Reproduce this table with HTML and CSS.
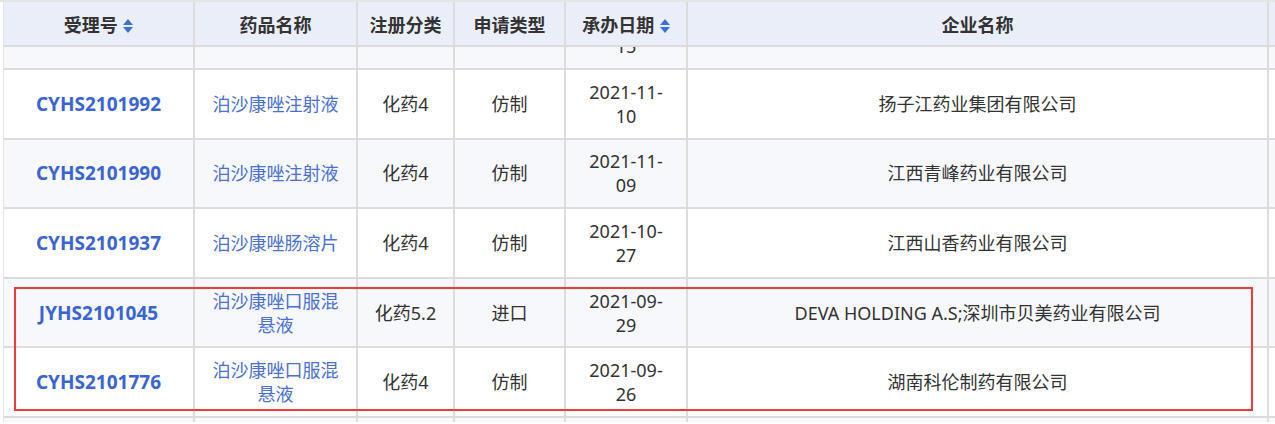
FILE: index.html
```html
<!DOCTYPE html>
<html lang="zh-CN">
<head>
    <meta charset="UTF-8">
    <meta name="viewport" content="width=device-width, initial-scale=1.0">
    <title>受理品种列表</title>
    <link rel="stylesheet" href="styles.css">
</head>
<body>

    <div class="page">
        <!-- Fixed header -->
        <table class="grid head">
            <colgroup>
                <col class="c-no"><col class="c-name"><col class="c-cat"><col class="c-type"><col class="c-date"><col class="c-corp"><col class="c-more">
            </colgroup>
            <thead>
                <tr>
                    <th>受理号 <svg class="sort" viewBox="0 0 10 14"><polygon points="5,0 10,6 0,6"/><polygon points="0,8 10,8 5,14"/></svg></th>
                    <th>药品名称</th>
                    <th>注册分类</th>
                    <th>申请类型</th>
                    <th>承办日期 <svg class="sort" viewBox="0 0 10 14"><polygon points="5,0 10,6 0,6"/><polygon points="0,8 10,8 5,14"/></svg></th>
                    <th>企业名称</th>
                    <th></th>
                </tr>
            </thead>
        </table>

        <!-- Scrolled body (first row mostly under the header) -->
        <div class="viewport">
            <table class="grid body">
                <colgroup>
                    <col class="c-no"><col class="c-name"><col class="c-cat"><col class="c-type"><col class="c-date"><col class="c-corp"><col class="c-more">
                </colgroup>
                <tbody>
                    <tr>
                        <td></td>
                        <td></td>
                        <td></td>
                        <td></td>
                        <td class="date">2021-11-15</td>
                        <td></td>
                        <td></td>
                    </tr>
                    <tr>
                        <td class="no">CYHS2101992</td>
                        <td class="name">泊沙康唑注射液</td>
                        <td>化药4</td>
                        <td>仿制</td>
                        <td class="date">2021-11-10</td>
                        <td>扬子江药业集团有限公司</td>
                        <td></td>
                    </tr>
                    <tr>
                        <td class="no">CYHS2101990</td>
                        <td class="name">泊沙康唑注射液</td>
                        <td>化药4</td>
                        <td>仿制</td>
                        <td class="date">2021-11-09</td>
                        <td>江西青峰药业有限公司</td>
                        <td></td>
                    </tr>
                    <tr>
                        <td class="no">CYHS2101937</td>
                        <td class="name">泊沙康唑肠溶片</td>
                        <td>化药4</td>
                        <td>仿制</td>
                        <td class="date">2021-10-27</td>
                        <td>江西山香药业有限公司</td>
                        <td></td>
                    </tr>
                    <tr>
                        <td class="no">JYHS2101045</td>
                        <td class="name">泊沙康唑口服混悬液</td>
                        <td>化药5.2</td>
                        <td>进口</td>
                        <td class="date">2021-09-29</td>
                        <td>DEVA HOLDING A.S;深圳市贝美药业有限公司</td>
                        <td></td>
                    </tr>
                    <tr>
                        <td class="no">CYHS2101776</td>
                        <td class="name">泊沙康唑口服混悬液</td>
                        <td>化药4</td>
                        <td>仿制</td>
                        <td class="date">2021-09-26</td>
                        <td>湖南科伦制药有限公司</td>
                        <td></td>
                    </tr>
                    <tr>
                        <td></td><td></td><td></td><td></td><td></td><td></td><td></td>
                    </tr>
                </tbody>
            </table>
        </div>

        <!-- Annotation box -->
        <div class="mark"></div>
    </div>

</body>
</html>
```

FILE: styles.css
```css
body {
    margin: 0;
    overflow: hidden;
    background-color: #fff;
    font-family: "Noto Sans", "Noto Sans CJK SC", sans-serif;
    font-size: 18px;
    color: #333;
}
.page {
    position: relative;
    height: 422px;
    border-top: 2px solid #e4e4e4;
    padding-left: 3px;
    overflow: hidden;
}
.grid {
    table-layout: fixed;
    width: 1466px;
    border-collapse: separate;
    border-spacing: 0;
    border-left: 1px solid #e4e4e4;
}
.c-no { width: 191px; }
.c-name { width: 163px; }
.c-cat { width: 97px; }
.c-type { width: 111px; }
.c-date { width: 122px; }
.c-corp { width: 581px; }
.c-more { width: 200px; }

th, td {
    box-sizing: border-box;
    border-right: 2px solid #dcdcdc;
    border-bottom: 2px solid #dcdcdc;
    text-align: center;
    vertical-align: middle;
}
th {
    height: 45px;
    padding: 0 8px;
    background-color: #e9eef9;
    font-weight: bold;
    color: #333;
    white-space: nowrap;
}
.sort {
    width: 10px;
    height: 14px;
    margin-left: 1px;
    vertical-align: -1px;
    fill: #3b6fd8;
}
.viewport {
    height: 375px;
    overflow: hidden;
}
.body {
    margin-top: -46.6px;
}
td {
    height: 69.6px;
    padding: 0 12px;
    line-height: 24px;
}
tbody tr:nth-child(odd) td {
    background-color: #f7f8fc;
}
td.no {
    color: #3a64d4;
    font-size: 19px;
    font-weight: bold;
}
td.name {
    color: #4a6fd6;
}
td.date {
    padding: 0 18px;
}
.mark {
    position: absolute;
    left: 14px;
    top: 285px;
    width: 1239px;
    height: 124px;
    box-sizing: border-box;
    border: 2px solid #f23a3a;
}
```
